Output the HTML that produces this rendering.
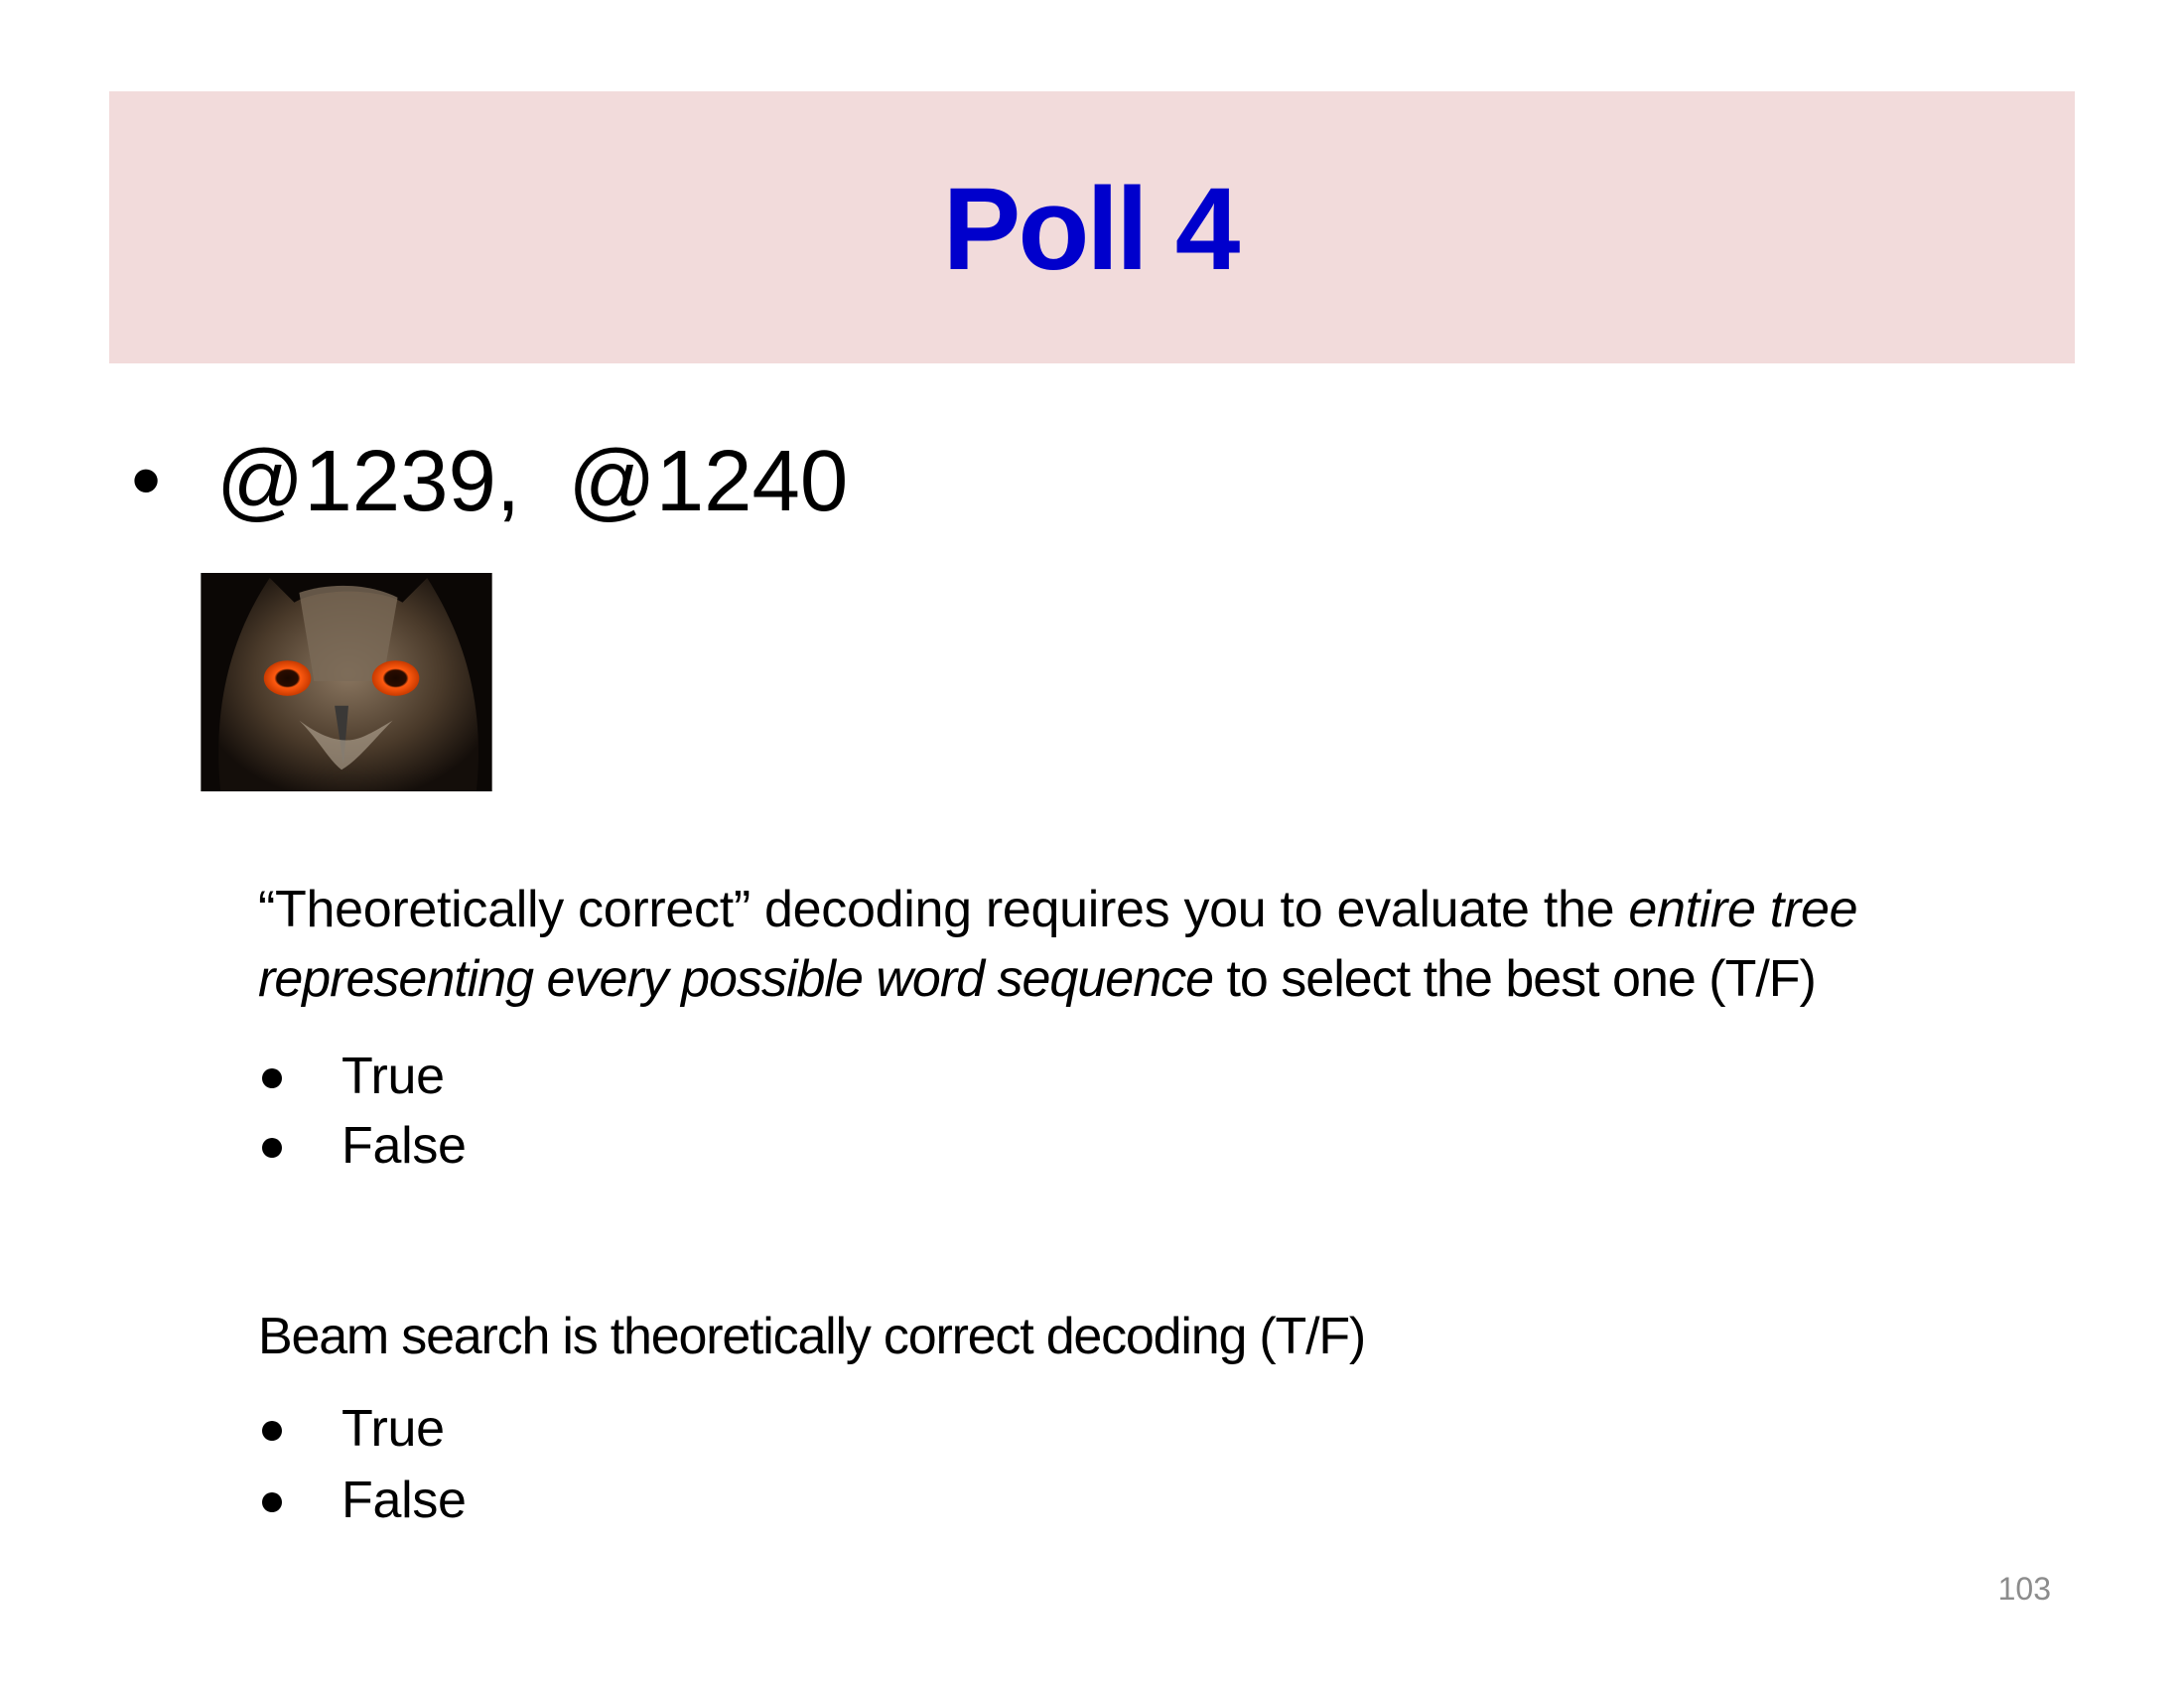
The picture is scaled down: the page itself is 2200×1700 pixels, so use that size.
<!DOCTYPE html>
<html><head><meta charset="utf-8"><style>
body{margin:0;width:2200px;height:1700px;background:#fff;position:relative;overflow:hidden;font-family:"Liberation Sans",sans-serif;color:#000}
.a{position:absolute;line-height:1;white-space:nowrap}
.band{position:absolute;left:110px;top:92px;width:1997px;height:274px;background:#f2dbdb}
.t{font-size:52px;letter-spacing:-0.3px}
.dot{position:absolute;width:20px;height:20px;border-radius:50%;background:#000}
</style></head><body>
<div class="band" style="width:1980px"></div>
<div class="a" style="left:0;width:2196px;text-align:center;top:172px;font-size:118px;font-weight:bold;color:#0000cc;letter-spacing:-3px">Poll 4</div>
<div class="a" style="left:132px;top:441px;font-size:86px">•</div>
<div class="a" style="left:218px;top:441px;font-size:87px;letter-spacing:0px">@1239,&nbsp; @1240</div>
<svg style="position:absolute;left:201px;top:577px" width="296" height="220" viewBox="0 0 296 222">
<defs>
<radialGradient id="h" cx="50%" cy="45%" r="60%"><stop offset="0" stop-color="#8a7660"/><stop offset="0.6" stop-color="#4a3a2a"/><stop offset="1" stop-color="#140e0a"/></radialGradient>
<radialGradient id="e" cx="50%" cy="50%" r="50%"><stop offset="0" stop-color="#1a0800"/><stop offset="0.45" stop-color="#2a0c00"/><stop offset="0.55" stop-color="#ff5a10"/><stop offset="1" stop-color="#c83a00"/></radialGradient>
</defs>
<rect width="296" height="222" fill="#0b0705"/>
<path d="M20 222 C10 120 40 50 70 5 L95 30 C120 15 180 15 205 30 L230 5 C265 60 290 130 280 222 Z" fill="url(#h)"/>
<path d="M100 20 C130 10 170 10 200 25 L185 110 L115 110 Z" fill="#7a6a58" opacity=".8"/>
<ellipse cx="88" cy="107" rx="24" ry="18" fill="url(#e)"/>
<ellipse cx="198" cy="107" rx="24" ry="18" fill="url(#e)"/>
<path d="M136 135 L150 135 L145 195 Z" fill="#3a3836"/>
<path d="M100 150 C120 170 130 190 143 200 C160 190 175 170 195 150 C170 165 160 170 148 170 C135 170 120 165 100 150Z" fill="#b8aa98" opacity=".6"/>
</svg>
<div class="a t" style="left:260px;top:890px">“Theoretically correct” decoding requires you to evaluate the <i>entire tree</i></div>
<div class="a t" style="left:260px;top:960px;letter-spacing:-1px"><i>representing every possible word sequence</i> to select the best one (T/F)</div>
<div class="dot" style="left:264px;top:1076px"></div>
<div class="a t" style="left:344px;top:1058px">True</div>
<div class="dot" style="left:264px;top:1146px"></div>
<div class="a t" style="left:344px;top:1128px">False</div>
<div class="a t" style="left:260px;top:1320px;letter-spacing:-1.2px">Beam search is theoretically correct decoding (T/F)</div>
<div class="dot" style="left:264px;top:1431px"></div>
<div class="a t" style="left:344px;top:1413px">True</div>
<div class="dot" style="left:264px;top:1503px"></div>
<div class="a t" style="left:344px;top:1485px">False</div>
<div class="a" style="left:1966px;width:100px;text-align:right;top:1584px;font-size:32px;color:#8c8c8c">103</div>
</body></html>
